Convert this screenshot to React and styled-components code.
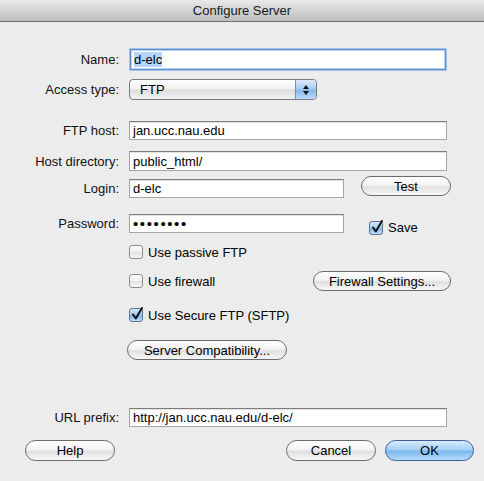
import styled, { createGlobalStyle } from "styled-components";

const Global = createGlobalStyle`
  html, body {
    margin: 0;
    padding: 0;
    background: #ececec;
  }
  body {
    font-family: "Liberation Sans", Arial, sans-serif;
    font-size: 13px;
    color: #000;
  }
`;

const Window = styled.div`
  width: 484px;
  height: 481px;
  background: #ececec;
  display: flex;
  flex-direction: column;
  overflow: hidden;
`;

const TitleBar = styled.div`
  height: 21px;
  border-bottom: 1px solid #6e6e6e;
  background: linear-gradient(#e9e9e9, #d3d3d3 50%, #bcbcbc);
  display: flex;
  align-items: center;
  justify-content: center;
  color: #1a1a1a;
  font-size: 13px;
`;

const Row = styled.div`
  display: flex;
  align-items: ${(p) => p.$align || "center"};
  height: ${(p) => p.$h}px;
  margin-top: ${(p) => p.$mt}px;
  padding-left: ${(p) => p.$indent || 0}px;
  padding-right: ${(p) => p.$right || 0}px;
`;

const Label = styled.label`
  width: 119px;
  margin-right: 10px;
  flex-shrink: 0;
  text-align: right;
  line-height: 19px;
  color: #111;
`;

const Field = styled.div`
  box-sizing: border-box;
  width: ${(p) => p.$w}px;
  height: ${(p) => p.$h || 19}px;
  background: #fff;
  border: 1px solid #a5a5a5;
  border-top-color: #7d7d7d;
  box-shadow: inset 0 1px 0 #e3e3e3;
  padding: 0 3px;
  display: flex;
  align-items: center;
  white-space: nowrap;
  overflow: hidden;
`;

const FocusField = styled(Field)`
  border: 1px solid #5f8fd0;
  box-shadow: 0 0 0 1px #a6c4ea, inset 0 0 0 1px #b9d1f0;
  margin-left: 1px;
  padding-left: 3px;
`;

const Selected = styled.span`
  background: #b5d5ff;
`;

const Dots = styled.span`
  font-size: 15px;
  line-height: 1;
  letter-spacing: 1.6px;
`;

const Popup = styled.div`
  box-sizing: border-box;
  width: 188px;
  height: 21px;
  border: 1px solid #7a7a7a;
  border-radius: 4px;
  background: linear-gradient(#ffffff, #f1f1f1 45%, #dedede 55%, #f2f2f2);
  display: flex;
  align-items: stretch;
  overflow: hidden;
`;

const PopupText = styled.div`
  flex: 1;
  padding-left: 10px;
  display: flex;
  align-items: center;
`;

const Stepper = styled.div`
  width: 20px;
  border-left: 1px solid #7b8fb8;
  background: linear-gradient(#dbeafb, #a9ccf3 45%, #86b7ee 55%, #bcdcfa);
  display: flex;
  align-items: center;
  justify-content: center;
`;

const Button = styled.button`
  box-sizing: border-box;
  width: ${(p) => p.$w}px;
  height: ${(p) => p.$h || 21}px;
  margin-left: ${(p) => p.$ml || 0}px;
  padding: 0;
  border: 1px solid ${(p) => (p.$default ? "#3f5f99" : "#6b6b6b")};
  border-radius: 11px;
  background: ${(p) =>
    p.$default
      ? "linear-gradient(#d7ebfc, #a6cff4 45%, #7db8ee 55%, #b3dcfb)"
      : "linear-gradient(#ffffff, #f3f3f3 45%, #e0e0e0 55%, #f7f7f7)"};
  font-family: "Liberation Sans", Arial, sans-serif;
  font-size: 13px;
  color: #000;
  align-self: ${(p) => p.$self || "auto"};
  flex-shrink: 0;
`;

const Check = styled.label`
  display: flex;
  align-items: center;
  gap: 5px;
  margin-left: ${(p) => p.$ml || 0}px;
  align-self: ${(p) => p.$self || "auto"};
  white-space: nowrap;
`;

const Box = styled.span`
  position: relative;
  box-sizing: border-box;
  width: 14px;
  height: 14px;
  border: 1px solid ${(p) => (p.$on ? "#5e6f8f" : "#8c8c8c")};
  border-radius: 3px;
  background: ${(p) =>
    p.$on
      ? "linear-gradient(#d6e8fb, #9fc8f2 50%, #80b6ee 55%, #c3e0fb)"
      : "linear-gradient(#fdfdfd, #eeeeee 50%, #e2e2e2 55%, #f6f6f6)"};
  flex-shrink: 0;
`;

const Tick = styled.svg`
  position: absolute;
  left: 1px;
  top: -2px;
`;

const Spacer = styled.div`
  flex: 1;
`;

function CheckBox({ on, children, ml, self }) {
  return (
    <Check $ml={ml} $self={self}>
      <Box $on={on}>
        {on && (
          <Tick width="13" height="14" viewBox="0 0 13 14">
            <path
              d="M2 7.5 L4.8 11.5 L11 1"
              fill="none"
              stroke="#111"
              strokeWidth="2"
              strokeLinecap="round"
              strokeLinejoin="round"
            />
          </Tick>
        )}
      </Box>
      <span>{children}</span>
    </Check>
  );
}

export default function App() {
  return (
    <Window>
      <Global />
      <TitleBar>Configure Server</TitleBar>

      <Row $mt={26} $h={22}>
        <Label>Name:</Label>
        <FocusField $w={316} $h={21}>
          <Selected>d-elc</Selected>
        </FocusField>
      </Row>

      <Row $mt={9} $h={21}>
        <Label>Access type:</Label>
        <Popup>
          <PopupText>FTP</PopupText>
          <Stepper>
            <svg width="8" height="12" viewBox="0 0 8 12">
              <path d="M4 1 L7 5 L1 5 Z" fill="#111" />
              <path d="M4 11 L7 7 L1 7 Z" fill="#111" />
            </svg>
          </Stepper>
        </Popup>
      </Row>

      <Row $mt={21} $h={19}>
        <Label>FTP host:</Label>
        <Field $w={318}>jan.ucc.nau.edu</Field>
      </Row>

      <Row $mt={11} $h={20}>
        <Label>Host directory:</Label>
        <Field $w={318} $h={20}>public_html/</Field>
      </Row>

      <Row $mt={5} $h={22} $align="flex-end">
        <Label>Login:</Label>
        <Field $w={215}>d-elc</Field>
        <Button $w={90} $h={20} $ml={17} $self="flex-start">
          Test
        </Button>
      </Row>

      <Row $mt={16} $h={21} $align="flex-start">
        <Label>Password:</Label>
        <Field $w={215}>
          <Dots>••••••••</Dots>
        </Field>
        <CheckBox on ml={25} self="flex-end">
          Save
        </CheckBox>
      </Row>

      <Row $mt={10} $h={14} $indent={129}>
        <CheckBox>Use passive FTP</CheckBox>
      </Row>

      <Row $mt={12} $h={20} $indent={129} $right={33}>
        <CheckBox>Use firewall</CheckBox>
        <Spacer />
        <Button $w={138} $h={20}>
          Firewall Settings...
        </Button>
      </Row>

      <Row $mt={17} $h={14} $indent={129}>
        <CheckBox on>Use Secure FTP (SFTP)</CheckBox>
      </Row>

      <Row $mt={18} $h={20} $indent={127}>
        <Button $w={160} $h={20}>
          Server Compatibility...
        </Button>
      </Row>

      <Row $mt={48} $h={19}>
        <Label>URL prefix:</Label>
        <Field $w={318}>http://jan.ucc.nau.edu/d-elc/</Field>
      </Row>

      <Row $mt={13} $h={21} $indent={25} $right={10}>
        <Button $w={90}>Help</Button>
        <Spacer />
        <Button $w={90}>Cancel</Button>
        <Button $w={89} $ml={9} $default>
          OK
        </Button>
      </Row>
    </Window>
  );
}
